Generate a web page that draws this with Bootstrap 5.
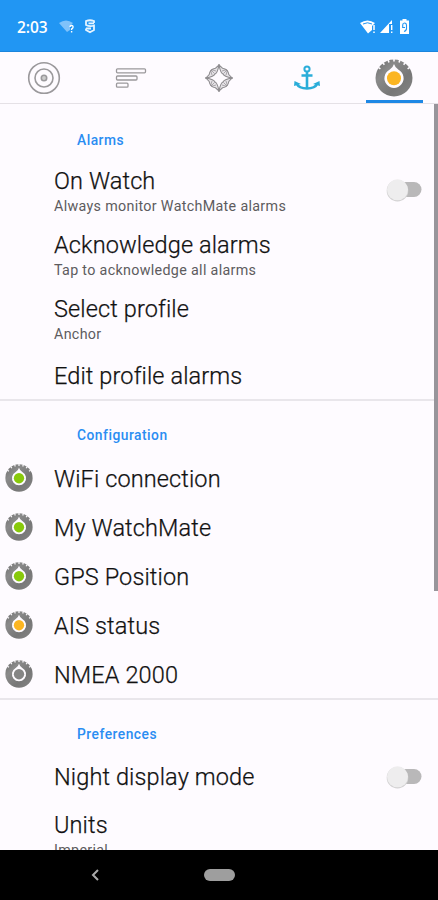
<!DOCTYPE html>
<html lang="en">
<head>
<meta charset="utf-8">
<meta name="viewport" content="width=device-width, initial-scale=1">
<title>WatchMate</title>
<link href="https://cdn.jsdelivr.net/npm/bootstrap@5.3.0/dist/css/bootstrap.min.css" rel="stylesheet">
<style>
body{font-family:Roboto,sans-serif;background:#fefbff;color:#111;height:900px}
svg{display:block;flex:none}
.statusbar{height:52px;background:#2196f3;color:#fff;padding:2px 29px 0 17px;border-bottom:1px solid #1c85dc}
.clock{font:600 15.5px/20px "Open Sans",sans-serif;letter-spacing:-.1px;width:42px}
.battery{margin-left:7px}
.tabs{height:52px;border-bottom:1px solid #e5e1e6}
.tab-item{width:87.6px;border:0;background:none;padding:0}
.underline{height:3px;width:57px;background:#1e88e5;bottom:0}
.content{height:746px}
.pref-head{font-size:13.8px;font-weight:500;line-height:20px;color:#2a8df2;padding:0 0 0 77px;margin:0;letter-spacing:.5px}
.alarms{padding-top:26px;height:295px}
.group{padding-top:24px}
.pref{padding-left:54px;padding-right:15px}
.pref-title{font-size:23.5px;line-height:28px;font-weight:300;white-space:nowrap;letter-spacing:.12px;-webkit-text-stroke:.25px #111}
.pref-sub{font-size:14.3px;line-height:18px;margin-top:2px;color:#5d5b5e;white-space:nowrap;letter-spacing:.32px;font-weight:400}
.two{height:64px;padding-top:17px}
.watch-switch{margin-top:10px}
.last{padding-top:20px}
.one{height:49px}
.icon-row{padding-left:5px;gap:21px}
.icon-row svg{margin-top:-1px}
.rows{padding-top:9px;height:253px}
.units{padding-top:10px}
.rule{height:2px;background:#e9e6eb}
.scrollthumb{width:4px;height:487px;background:#98959b;right:0;top:0}
.navbar-sys{height:50px;background:#000}
.back-key{margin-left:91px}
.home-key{width:31px;height:12px;background:#9e9e9e;margin-left:104px}
</style>
</head>
<body class="d-flex flex-column overflow-hidden">
<svg width="0" height="0" class="position-absolute">
<defs>
<linearGradient id="metal" x1="0" x2="1" y1="0" y2="1"><stop offset="0" stop-color="#6c6c6c"/><stop offset=".3" stop-color="#8a8a8a"/><stop offset=".65" stop-color="#777"/><stop offset="1" stop-color="#858585"/></linearGradient>
<symbol id="knob" viewBox="0 0 38 38">
<circle cx="19" cy="19" r="18.5" fill="url(#metal)"/>
<g stroke="#fefbff" stroke-width="1.6"><path id="n" d="M19 0V2.600"/><use href="#n" transform="rotate(-18 19 19)"/><use href="#n" transform="rotate(18 19 19)"/><use href="#n" transform="rotate(-36 19 19)"/><use href="#n" transform="rotate(36 19 19)"/><use href="#n" transform="rotate(-56 19 19)"/><use href="#n" transform="rotate(56 19 19)"/></g>
<path d="M19 5Q20 8.500 23.500 10.800A9.600 9.600 0 1 1 14.500 10.800Q18 8.500 19 5Z" fill="#fefbff"/>
<circle cx="19" cy="19.300" r="7" fill="currentColor"/>
</symbol>
<symbol id="switch" viewBox="0 0 38 26"><rect x="10" y="5" width="26.500" height="15" rx="7.500" fill="#b9b8b9"/><circle cx="12.500" cy="13.700" r="10.800" fill="#d3d2d3"/><circle cx="12.500" cy="12.800" r="10.500" fill="#eeedee"/></symbol>
</defs>
</svg>

<header class="statusbar d-flex align-items-center flex-shrink-0">
<span class="clock">2:03</span>
<svg width="17" height="14" viewBox="0 0 17 14"><path d="M0 3Q7 -2 14 3L11 6V10L8 12Z" fill="#7fc2fa"/><path d="M11 7Q11 5.500 12.600 5.500T14 7.200Q14 8.300 12.600 9V10M12.600 11V12.500" fill="none" stroke="#fff" stroke-width="1.4"/></svg>
<svg class="ms-2" width="12" height="15" viewBox="0 0 12 15"><path d="M10 4V2Q6 .5 2 2V6Q6 8 10 6.500V11L6 13.300L2 11V9.500M4.500 4.300H10M2 9.500H7" fill="none" stroke="#e4f3ff" stroke-width="1.8"/></svg>
<div class="ms-auto d-flex align-items-center">
<svg width="16" height="14" viewBox="0 0 16 14"><path d="M0 3Q7.500 -2 15 3L12 6V10L8 13.500Z" fill="#fff"/><path d="M3 4Q7.500 1.500 12 4" fill="none" stroke="#2196f3"/><path d="M14 5v5M14 11.500V13" stroke="#fff" stroke-width="1.5"/></svg>
<svg class="ms-1" width="13" height="14" viewBox="0 0 13 14"><path d="M0 13L12 0V4H9V13Z" fill="#fff"/><path d="M11.700 5V10M11.700 11.500V13" stroke="#fff" stroke-width="1.4"/></svg>
<svg class="battery" width="9" height="15" viewBox="0 0 9 15"><path d="M2.500 0H6.500V1.500H9V15H0V1.500H2.500Z" fill="#fff"/><path d="M2.700 6Q2.700 4 4.500 4T6.500 6V10Q6 12 4 12.500M2.700 6V8.500H5" fill="none" stroke="#2196f3" stroke-width="1.1"/></svg>
</div>
</header>

<nav class="tabs d-flex position-relative flex-shrink-0">
<button class="tab-item d-flex align-items-center justify-content-center" aria-label="Target">
<svg width="34" height="34" viewBox="0 0 34 34" fill="none" stroke="#9b999c" stroke-width="1.6"><circle cx="17" cy="17" r="15.300"/><circle cx="17" cy="17" r="9"/><circle cx="17" cy="17" r="2.700" fill="#ccc"/></svg></button>
<button class="tab-item d-flex align-items-center justify-content-center" aria-label="List">
<svg width="32" height="22" viewBox="0 0 32 22" fill="none" stroke="#9b999c" stroke-width="1.3"><rect x="1.500" y="1.800" width="29" height="4" rx="1"/><rect x="1.500" y="9" width="20.500" height="4" rx="1"/><rect x="1.500" y="16.200" width="11.500" height="4" rx="1"/></svg></button>
<button class="tab-item d-flex align-items-center justify-content-center" aria-label="Compass">
<svg width="28" height="28" viewBox="-14 -14 28 28" fill="none" stroke="#8f8d90" stroke-width="1.1"><g id="petal"><path d="M0 -13Q1.500 -5 4 -4Q5 -1.500 13 0L9.800 -3.500Q9 -9 3.500 -9.800Z" fill="#e6e3e7"/><path d="M3 -7L8 -8.500M4.500 -4.500L8 -8M7 -3L8.500 -8" stroke-width=".7"/></g><use href="#petal" transform="rotate(90)"/><use href="#petal" transform="rotate(180)"/><use href="#petal" transform="rotate(270)"/></svg></button>
<button class="tab-item d-flex align-items-center justify-content-center" aria-label="Anchor">
<svg width="26" height="26" viewBox="0 0 26 26" fill="none" stroke="#2badd9" stroke-width="2.600"><circle cx="13" cy="4" r="2.600" stroke-width="2"/><path d="M13 7V23M7.500 10.500H18.500"/><path d="M2.500 18.500Q5 23.500 13 23.500T23.500 18.500"/><path d="M0 21L.5 16L7 19ZM26 21L25.500 16L19 19Z" fill="#2badd9" stroke="none"/></svg></button>
<button class="tab-item d-flex align-items-center justify-content-center position-relative" aria-label="Settings">
<svg width="38" height="38" color="#fbb522"><use href="#knob"/></svg><span class="underline position-absolute"></span></button>
</nav>

<main class="content position-relative overflow-hidden flex-shrink-0">
<div class="scrollthumb position-absolute"></div>
<section class="alarms">
<h2 class="pref-head">Alarms</h2>
<div class="pref two d-flex justify-content-between"><div><div class="pref-title">On Watch</div><div class="pref-sub">Always monitor WatchMate alarms</div></div>
<svg width="38" height="26" class="watch-switch"><use href="#switch"/></svg></div>
<div class="pref two"><div class="pref-title">Acknowledge alarms</div><div class="pref-sub">Tap to acknowledge all alarms</div></div>
<div class="pref two"><div class="pref-title">Select profile</div><div class="pref-sub">Anchor</div></div>
<div class="pref last"><div class="pref-title">Edit profile alarms</div></div>
</section>
<div class="rule"></div>
<section class="group">
<h2 class="pref-head">Configuration</h2>
<div class="rows">
<div class="one icon-row d-flex align-items-center"><svg width="28" height="28" color="#88c90b"><use href="#knob"/></svg><span class="pref-title">WiFi connection</span></div>
<div class="one icon-row d-flex align-items-center"><svg width="28" height="28" color="#88c90b"><use href="#knob"/></svg><span class="pref-title">My WatchMate</span></div>
<div class="one icon-row d-flex align-items-center"><svg width="28" height="28" color="#88c90b"><use href="#knob"/></svg><span class="pref-title">GPS Position</span></div>
<div class="one icon-row d-flex align-items-center"><svg width="28" height="28" color="#fbb522"><use href="#knob"/></svg><span class="pref-title">AIS status</span></div>
<div class="one icon-row d-flex align-items-center"><svg width="28" height="28" color="#858585"><use href="#knob"/></svg><span class="pref-title">NMEA 2000</span></div>
</div>
</section>
<div class="rule"></div>
<section class="group">
<h2 class="pref-head mb-2">Preferences</h2>
<div class="pref one d-flex align-items-center justify-content-between"><span class="pref-title">Night display mode</span><svg width="38" height="26"><use href="#switch"/></svg></div>
<div class="pref units"><div class="pref-title">Units</div><div class="pref-sub">Imperial</div></div>
</section>
</main>
<footer class="navbar-sys d-flex align-items-center flex-shrink-0">
<svg class="back-key" width="9" height="14" viewBox="0 0 9 14"><path d="M7 2L2 7L7 12" fill="none" stroke="#aaa" stroke-width="2"/></svg>
<div class="home-key rounded-pill"></div>
</footer>
<script src="https://cdn.jsdelivr.net/npm/bootstrap@5.3.0/dist/js/bootstrap.bundle.min.js"></script>
</body>
</html>
